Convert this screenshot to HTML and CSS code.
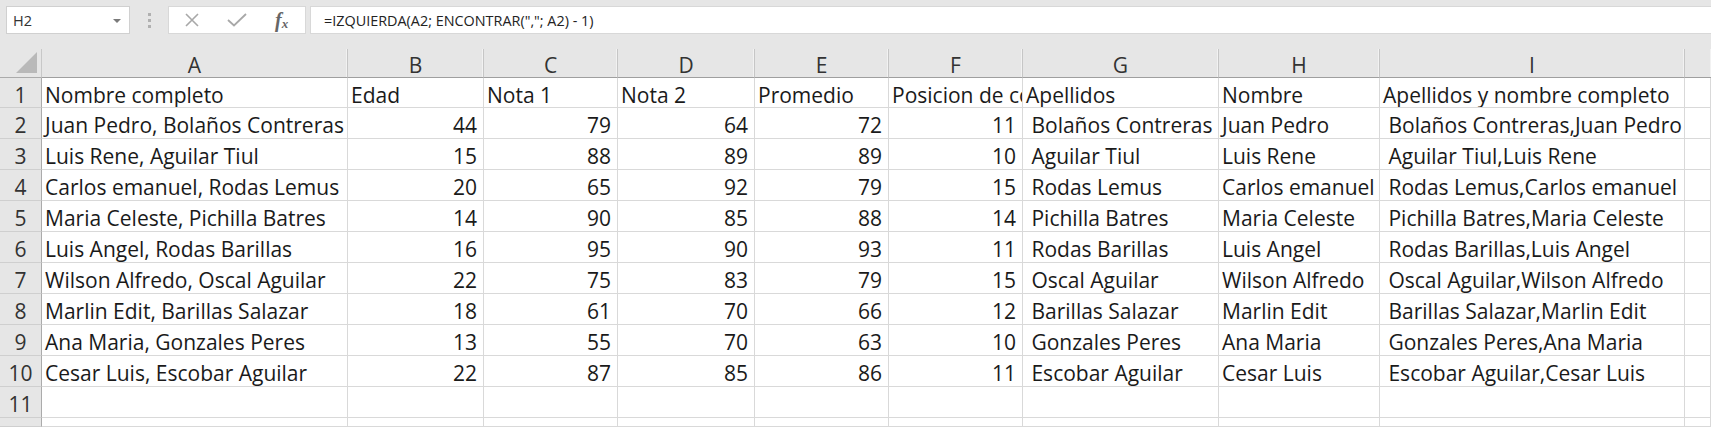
FILE: index.html
```html
<!DOCTYPE html>
<html lang="es">
<head>
  <meta charset="UTF-8" />
  <title>Libro1 - Excel</title>
  <link rel="stylesheet" href="styles.css">
</head>
<body>
  <!-- Formula bar -->
  <div class="toolbar">
    <div class="namebox">
      <span>H2</span>
      <span class="caret"></span>
    </div>
    <div class="grip"><i></i><i></i><i></i></div>
    <div class="fxbox">
      <svg class="ico" width="16" height="14" viewBox="0 0 16 14">
        <path d="M2 1 L14 13 M14 1 L2 13" stroke="#a8a8a8" stroke-width="1.6" fill="none"/>
      </svg>
      <svg class="ico" width="20" height="14" viewBox="0 0 20 14">
        <path d="M1 7 L7 12.5 L19 1" stroke="#a8a8a8" stroke-width="1.8" fill="none"/>
      </svg>
      <span class="fx">f<sub>x</sub></span>
    </div>
    <div class="formula">=IZQUIERDA(A2; ENCONTRAR(","; A2) - 1)</div>
  </div>

  <!-- Sheet -->
  <div class="sheet">
    <div class="corner"><span class="tri"></span></div>
    <div class="hd">A</div><div class="hd">B</div><div class="hd">C</div><div class="hd">D</div><div class="hd">E</div>
    <div class="hd">F</div><div class="hd">G</div><div class="hd">H</div><div class="hd">I</div><div class="hd last"></div>

    <div class="rh">1</div>
    <div class="c">Nombre completo</div><div class="c">Edad</div><div class="c">Nota 1</div><div class="c">Nota 2</div>
    <div class="c">Promedio</div><div class="c">Posicion de coma</div><div class="c">Apellidos</div><div class="c">Nombre</div>
    <div class="c">Apellidos y nombre completo</div><div class="c"></div>

    <div class="rh">2</div>
    <div class="c">Juan Pedro, Bolaños Contreras</div><div class="c n">44</div><div class="c n">79</div><div class="c n">64</div>
    <div class="c n">72</div><div class="c n">11</div><div class="c"> Bolaños Contreras</div><div class="c">Juan Pedro</div>
    <div class="c"> Bolaños Contreras,Juan Pedro</div><div class="c"></div>

    <div class="rh">3</div>
    <div class="c">Luis Rene, Aguilar Tiul</div><div class="c n">15</div><div class="c n">88</div><div class="c n">89</div>
    <div class="c n">89</div><div class="c n">10</div><div class="c"> Aguilar Tiul</div><div class="c">Luis Rene</div>
    <div class="c"> Aguilar Tiul,Luis Rene</div><div class="c"></div>

    <div class="rh">4</div>
    <div class="c">Carlos emanuel, Rodas Lemus</div><div class="c n">20</div><div class="c n">65</div><div class="c n">92</div>
    <div class="c n">79</div><div class="c n">15</div><div class="c"> Rodas Lemus</div><div class="c">Carlos emanuel</div>
    <div class="c"> Rodas Lemus,Carlos emanuel</div><div class="c"></div>

    <div class="rh">5</div>
    <div class="c">Maria Celeste, Pichilla Batres</div><div class="c n">14</div><div class="c n">90</div><div class="c n">85</div>
    <div class="c n">88</div><div class="c n">14</div><div class="c"> Pichilla Batres</div><div class="c">Maria Celeste</div>
    <div class="c"> Pichilla Batres,Maria Celeste</div><div class="c"></div>

    <div class="rh">6</div>
    <div class="c">Luis Angel, Rodas Barillas</div><div class="c n">16</div><div class="c n">95</div><div class="c n">90</div>
    <div class="c n">93</div><div class="c n">11</div><div class="c"> Rodas Barillas</div><div class="c">Luis Angel</div>
    <div class="c"> Rodas Barillas,Luis Angel</div><div class="c"></div>

    <div class="rh">7</div>
    <div class="c">Wilson Alfredo, Oscal Aguilar</div><div class="c n">22</div><div class="c n">75</div><div class="c n">83</div>
    <div class="c n">79</div><div class="c n">15</div><div class="c"> Oscal Aguilar</div><div class="c">Wilson Alfredo</div>
    <div class="c"> Oscal Aguilar,Wilson Alfredo</div><div class="c"></div>

    <div class="rh">8</div>
    <div class="c">Marlin Edit, Barillas Salazar</div><div class="c n">18</div><div class="c n">61</div><div class="c n">70</div>
    <div class="c n">66</div><div class="c n">12</div><div class="c"> Barillas Salazar</div><div class="c">Marlin Edit</div>
    <div class="c"> Barillas Salazar,Marlin Edit</div><div class="c"></div>

    <div class="rh">9</div>
    <div class="c">Ana Maria, Gonzales Peres</div><div class="c n">13</div><div class="c n">55</div><div class="c n">70</div>
    <div class="c n">63</div><div class="c n">10</div><div class="c"> Gonzales Peres</div><div class="c">Ana Maria</div>
    <div class="c"> Gonzales Peres,Ana Maria</div><div class="c"></div>

    <div class="rh">10</div>
    <div class="c">Cesar Luis, Escobar Aguilar</div><div class="c n">22</div><div class="c n">87</div><div class="c n">85</div>
    <div class="c n">86</div><div class="c n">11</div><div class="c"> Escobar Aguilar</div><div class="c">Cesar Luis</div>
    <div class="c"> Escobar Aguilar,Cesar Luis</div><div class="c"></div>

    <div class="rh">11</div>
    <div class="c"></div><div class="c"></div><div class="c"></div><div class="c"></div><div class="c"></div>
    <div class="c"></div><div class="c"></div><div class="c"></div><div class="c"></div><div class="c"></div>

    <div class="rh"></div>
    <div class="c"></div><div class="c"></div><div class="c"></div><div class="c"></div><div class="c"></div>
    <div class="c"></div><div class="c"></div><div class="c"></div><div class="c"></div><div class="c"></div>
  </div>
</body>
</html>
```

FILE: styles.css
```css
body {
  margin: 0;
  height: 427px;
  background-color: #e6e6e6;
  font-family: "Open Sans", sans-serif;
  color: #1a1a1a;
  overflow: hidden;
}

/* formula bar */
.toolbar {
  display: flex;
  align-items: stretch;
  height: 28px;
  padding: 6px 0 0 6px;
  margin-bottom: 15px;
}
.namebox {
  width: 124px;
  box-sizing: border-box;
  background-color: #ffffff;
  border: 1px solid #d0d0d0;
  display: flex;
  align-items: center;
  justify-content: space-between;
  padding: 0 8px 0 6px;
  font-size: 14.5px;
  color: #333;
}
.caret {
  width: 0;
  height: 0;
  border-left: 4px solid transparent;
  border-right: 4px solid transparent;
  border-top: 4px solid #7a7a7a;
  margin-top: 2px;
}
.grip {
  width: 38px;
  display: flex;
  flex-direction: column;
  align-items: center;
  justify-content: center;
  gap: 3px;
}
.grip i {
  width: 3px;
  height: 3px;
  background-color: #b0b0b0;
}
.fxbox {
  width: 138px;
  box-sizing: border-box;
  background-color: #ffffff;
  border: 1px solid #d8d8d8;
  display: flex;
  align-items: center;
  padding-left: 15px;
  gap: 30px;
}
.fxbox .ico:nth-child(2) {
  margin-left: -3px;
}
.fx {
  font-family: "Liberation Serif", serif;
  font-style: italic;
  font-weight: bold;
  font-size: 20px;
  color: #666;
  margin-left: -2px;
}
.fx sub {
  font-size: 13px;
  vertical-align: -1px;
}
.formula {
  flex: 1;
  margin-left: 4px;
  background-color: #ffffff;
  border: 1px solid #d8d8d8;
  border-right: none;
  display: flex;
  align-items: center;
  padding-left: 13px;
  font-size: 14.4px;
  color: #222;
}

/* grid */
.sheet {
  display: grid;
  grid-template-columns: 42px 306px 136px 134px 137px 134px 134px 196px 161px 305px 1fr;
  grid-template-rows: 29px 30px repeat(10, 31px) 9px;
  background-color: #ffffff;
}
.corner {
  background-color: #e6e6e6;
  border-right: 1px solid #c8c8c8;
  border-bottom: 1px solid #ababab;
  position: relative;
}
.tri {
  position: absolute;
  right: 4px;
  bottom: 4px;
  width: 0;
  height: 0;
  border-left: 21px solid transparent;
  border-bottom: 21px solid #b9b9b9;
}
.hd {
  background-color: #e6e6e6;
  border-right: 1px solid #c6c6c6;
  border-bottom: 1px solid #9f9f9f;
  box-shadow: inset -1px 0 0 #f2f2f2;
  text-align: center;
  font-size: 21px;
  line-height: 30px;
  padding-top: 1px;
  color: #333;
  overflow: hidden;
}
.hd.last {
  border-right: none;
}
.rh {
  background-color: #e6e6e6;
  border-right: 1px solid #ababab;
  border-bottom: 1px solid #cfcfcf;
  text-align: center;
  font-size: 21px;
  line-height: 30px;
  padding-top: 2px;
  color: #333;
  overflow: hidden;
}
.c {
  border-right: 1px solid #d9d9d9;
  border-bottom: 1px solid #d9d9d9;
  padding: 2px 4px 0 3px;
  font-size: 21px;
  line-height: 30px;
  white-space: pre;
  overflow: hidden;
}
.n {
  text-align: right;
  padding-right: 6px;
}
```
